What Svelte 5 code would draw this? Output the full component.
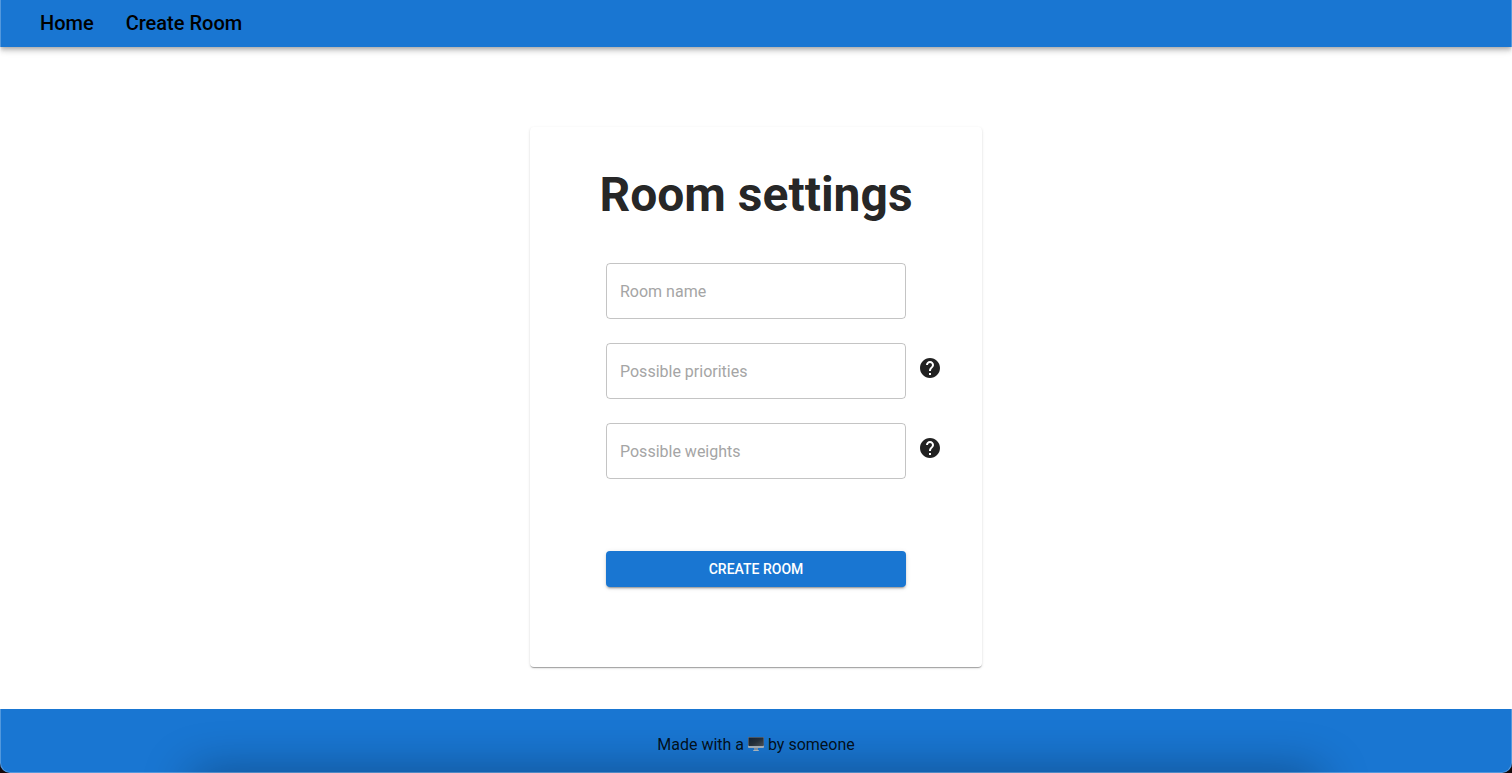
<script>
  const links = ['Home', 'Create Room'];
  const fields = $state([
    { id: 'room-name', label: 'Room name', help: false, value: '' },
    { id: 'priorities', label: 'Possible priorities', help: true, value: '' },
    { id: 'weights', label: 'Possible weights', help: true, value: '' }
  ]);
</script>

<div class="page">
  <header>
    <nav>
      {#each links as link}
        <a href="#{link}">{link}</a>
      {/each}
    </nav>
  </header>

  <main>
    <form class="card" onsubmit={(e) => e.preventDefault()}>
      <h1>Room settings</h1>
      <div class="fields">
        {#each fields as field}
          <div class="row">
            <input id={field.id} type="text" placeholder={field.label} aria-label={field.label} bind:value={field.value} />
            {#if field.help}
              <button class="help" type="button" aria-label={field.label}>
                <svg viewBox="0 0 24 24" width="24" height="24" aria-hidden="true">
                  <path fill="currentColor" d="M12 2C6.48 2 2 6.48 2 12s4.48 10 10 10 10-4.48 10-10S17.52 2 12 2zm1 17h-2v-2h2v2zm2.07-7.75-.9.92C13.45 12.9 13 13.5 13 15h-2v-.5c0-1.1.45-2.1 1.17-2.83l1.24-1.26c.37-.36.59-.86.59-1.41 0-1.1-.9-2-2-2s-2 .9-2 2H8c0-2.21 1.79-4 4-4s4 1.79 4 4c0 .88-.36 1.68-.93 2.25z" />
                </svg>
              </button>
            {/if}
          </div>
        {/each}
      </div>
      <div class="row">
        <button class="submit" type="submit">CREATE ROOM</button>
      </div>
    </form>
  </main>

  <footer>
    <p>
      Made with a
      <svg class="computer" viewBox="0 0 16 16" width="16" height="16" aria-hidden="true">
        <defs>
          <linearGradient id="screen" x1="0" y1="0" x2="1" y2="1">
            <stop offset="0" stop-color="#152536" />
            <stop offset="0.5" stop-color="#26313c" />
            <stop offset="1" stop-color="#4b535a" />
          </linearGradient>
        </defs>
        <rect x="0" y="1" width="16" height="11" rx="1" fill="#a9b4bd" />
        <rect x="0" y="1" width="16" height="9" rx="1" fill="#49596a" />
        <rect x="1" y="2" width="14" height="8" fill="url(#screen)" />
        <path d="M6 12h4v2H6z" fill="#8494a4" />
        <path d="M5.5 14h5l.5 1H5z" fill="#b5bec5" />
      </svg>
      by someone
    </p>
  </footer>

  <div class="frame"></div>
</div>

<style>
  :global(body) {
    margin: 0;
    background: #fff;
  }

  .page {
    position: relative;
    display: flex;
    flex-direction: column;
    min-height: 100vh;
    overflow: hidden;
    color: rgba(0, 0, 0, 0.87);
    font-family: Roboto, Arial, sans-serif;
    font-size: 16px;
    line-height: 24px;
  }

  header {
    padding: 11px 40px 12px;
    background: #1976d2;
    box-shadow:
      0 2px 4px -1px rgba(0, 0, 0, 0.2),
      0 4px 5px 0 rgba(0, 0, 0, 0.14),
      0 1px 10px 0 rgba(0, 0, 0, 0.12);
  }

  nav {
    display: flex;
    gap: 32px;
  }

  nav a {
    color: #000;
    font-size: 20px;
    font-weight: 500;
    text-decoration: none;
  }

  main {
    display: flex;
    flex: 1;
    align-items: flex-start;
    justify-content: center;
    padding: 80px 16px 40px;
  }

  .card {
    padding: 40px 40px 80px;
    border-radius: 4px;
    background: #fff;
    box-shadow:
      0 2px 1px -1px rgba(0, 0, 0, 0.2),
      0 1px 1px 0 rgba(0, 0, 0, 0.14),
      0 1px 3px 0 rgba(0, 0, 0, 0.12);
  }

  h1 {
    margin: 0 0 40px;
    font-size: 48px;
    font-weight: 700;
    line-height: 56px;
    text-align: center;
  }

  .fields {
    display: grid;
    gap: 24px;
    margin-bottom: 72px;
  }

  .row {
    display: grid;
    grid-template-columns: 36px 300px 36px;
    align-items: start;
  }

  input {
    grid-column: 2;
    box-sizing: border-box;
    width: 100%;
    height: 56px;
    padding: 0 13px;
    border: 1px solid rgba(0, 0, 0, 0.23);
    border-radius: 4px;
    background: transparent;
    color: inherit;
    font: inherit;
  }

  input::placeholder {
    color: #a5a5a5;
    opacity: 1;
  }

  .help {
    grid-column: 3;
    justify-self: end;
    margin: 13px 0 0;
    padding: 0;
    border: 0;
    background: none;
    color: inherit;
    line-height: 0;
  }

  .submit {
    grid-column: 2;
    padding: 6px 16px;
    border: 0;
    border-radius: 4px;
    background: #1976d2;
    box-shadow:
      0 3px 1px -2px rgba(0, 0, 0, 0.2),
      0 2px 2px 0 rgba(0, 0, 0, 0.14),
      0 1px 5px 0 rgba(0, 0, 0, 0.12);
    color: #fff;
    font-family: inherit;
    font-size: 14px;
    font-weight: 500;
    line-height: 24px;
  }

  footer {
    position: relative;
    padding: 24px 16px 16px;
    background: #1976d2;
    text-align: center;
  }

  footer::after {
    position: absolute;
    right: 13%;
    bottom: -24px;
    left: 13%;
    height: 16px;
    border-radius: 16px;
    box-shadow: 0 0 48px 8px rgba(0, 0, 0, 0.4);
    content: '';
  }

  p {
    margin: 0;
  }

  .computer {
    vertical-align: -2px;
  }

  .frame {
    position: absolute;
    inset: 0;
    border: 1px solid rgba(255, 255, 255, 0.25);
    border-top: 0;
    border-radius: 0 0 10px 10px;
    box-shadow: 0 0 0 10px #14090a;
    pointer-events: none;
  }
</style>
